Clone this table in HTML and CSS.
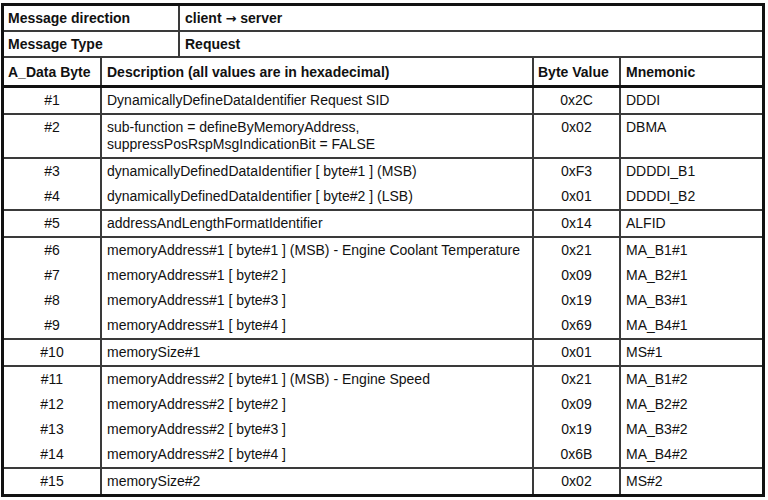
FILE: index.html
```html
<!DOCTYPE html>
<html>
<head>
<meta charset="utf-8">
<link rel="stylesheet" href="styles.css">
</head>
<body>
<div class="frame">
  <div class="trow"><div class="tk">Message direction</div><div class="tv">client <span class="arrow">&rarr;</span> server</div></div>
  <div class="trow"><div class="tk">Message Type</div><div class="tv">Request</div></div>
  <div class="row head"><div>A_Data Byte</div><div>Description (all values are in hexadecimal)</div><div>Byte Value</div><div>Mnemonic</div></div>
  <div class="row"><div class="n">#1</div><div>DynamicallyDefineDataIdentifier Request SID</div><div class="n">0x2C</div><div>DDDI</div></div>
  <div class="row g two"><div class="n">#2</div><div>sub-function = defineByMemoryAddress,<br>suppressPosRspMsgIndicationBit = FALSE</div><div class="n">0x02</div><div>DBMA</div></div>
  <div class="row g"><div class="n">#3</div><div>dynamicallyDefinedDataIdentifier [ byte#1 ] (MSB)</div><div class="n">0xF3</div><div>DDDDI_B1</div></div>
  <div class="row"><div class="n">#4</div><div>dynamicallyDefinedDataIdentifier [ byte#2 ] (LSB)</div><div class="n">0x01</div><div>DDDDI_B2</div></div>
  <div class="row g"><div class="n">#5</div><div>addressAndLengthFormatIdentifier</div><div class="n">0x14</div><div>ALFID</div></div>
  <div class="row g"><div class="n">#6</div><div>memoryAddress#1 [ byte#1 ] (MSB) - Engine Coolant Temperature</div><div class="n">0x21</div><div>MA_B1#1</div></div>
  <div class="row"><div class="n">#7</div><div>memoryAddress#1 [ byte#2 ]</div><div class="n">0x09</div><div>MA_B2#1</div></div>
  <div class="row"><div class="n">#8</div><div>memoryAddress#1 [ byte#3 ]</div><div class="n">0x19</div><div>MA_B3#1</div></div>
  <div class="row"><div class="n">#9</div><div>memoryAddress#1 [ byte#4 ]</div><div class="n">0x69</div><div>MA_B4#1</div></div>
  <div class="row g"><div class="n">#10</div><div>memorySize#1</div><div class="n">0x01</div><div>MS#1</div></div>
  <div class="row g"><div class="n">#11</div><div>memoryAddress#2 [ byte#1 ] (MSB) - Engine Speed</div><div class="n">0x21</div><div>MA_B1#2</div></div>
  <div class="row"><div class="n">#12</div><div>memoryAddress#2 [ byte#2 ]</div><div class="n">0x09</div><div>MA_B2#2</div></div>
  <div class="row"><div class="n">#13</div><div>memoryAddress#2 [ byte#3 ]</div><div class="n">0x19</div><div>MA_B3#2</div></div>
  <div class="row"><div class="n">#14</div><div>memoryAddress#2 [ byte#4 ]</div><div class="n">0x6B</div><div>MA_B4#2</div></div>
  <div class="row g"><div class="n">#15</div><div>memorySize#2</div><div class="n">0x02</div><div>MS#2</div></div>
</div>
</body>
</html>
```
FILE: styles.css
```css
html, body {
  margin: 0;
  padding: 0;
  background: #fff;
}
body {
  padding: 3px 0 0 1px;
}
.frame {
  width: 764px;
  box-sizing: border-box;
  border: 3px solid #111;
  font-family: "Liberation Sans", Arial, sans-serif;
  font-size: 14px;
  line-height: 17px;
  color: #111;
}
.trow {
  display: grid;
  grid-template-columns: 176px 1fr;
  height: 26px;
  box-sizing: border-box;
  border-bottom: 2px solid #3a3a3a;
  font-weight: bold;
}
.trow > div {
  padding-top: 4px;
  white-space: nowrap;
}
.tk {
  padding-left: 4px;
  border-right: 2px solid #3a3a3a;
}
.tv {
  padding-left: 5px;
}
.arrow {
  font-family: "DejaVu Sans", sans-serif;
  font-weight: bold;
  font-size: 13px;
}
.row {
  display: grid;
  grid-template-columns: 98px 432px 87px 1fr;
  height: 25px;
  box-sizing: border-box;
}
.row > div {
  box-sizing: border-box;
  padding: 4px 5px 0;
  white-space: nowrap;
  border-right: 2px solid #3a3a3a;
}
.row > div:last-child {
  border-right: 0;
}
.row > .n {
  text-align: center;
}
.row.g {
  height: 27px;
  border-top: 2px solid #3a3a3a;
}
.row.two {
  height: 44px;
}
.row.head {
  height: 30px;
  border-bottom: 3px solid #111;
  font-weight: bold;
}
.row.head > div {
  padding-top: 6px;
}
.row.head > div:first-child {
  padding-left: 4px;
}
.row.head > div:nth-child(3) {
  padding-left: 4px;
}
```
